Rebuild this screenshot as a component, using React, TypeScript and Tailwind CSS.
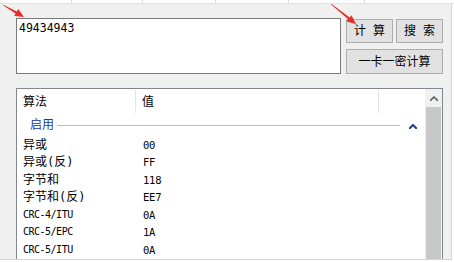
const cjk = "font-['DejaVu_Sans_Mono','Noto_Sans_CJK_SC',monospace]";
const mono = "font-['DejaVu_Sans_Mono',monospace]";

const rows: [string, string][] = [
  ["异或", "00"],
  ["异或(反)", "FF"],
  ["字节和", "118"],
  ["字节和(反)", "EE7"],
  ["CRC-4/ITU", "0A"],
  ["CRC-5/EPC", "1A"],
  ["CRC-5/ITU", "0A"],
];

// tapered red annotation arrow, tail -> tip
const arrow = (x1: number, y1: number, x2: number, y2: number) => {
  const dx = x2 - x1;
  const dy = y2 - y1;
  const len = Math.hypot(dx, dy);
  const ux = dx / len;
  const uy = dy / len;
  const nx = -uy;
  const ny = ux;
  const head = 9;
  const bx = x2 - ux * head;
  const by = y2 - uy * head;
  const p = (x: number, y: number) => `${x.toFixed(1)},${y.toFixed(1)}`;
  return [
    p(x1 + nx * 0.3, y1 + ny * 0.3),
    p(bx + nx * 1.2, by + ny * 1.2),
    p(bx + nx * 4, by + ny * 4),
    p(x2, y2),
    p(bx - nx * 4, by - ny * 4),
    p(bx - nx * 1.2, by - ny * 1.2),
    p(x1 - nx * 0.3, y1 - ny * 0.3),
  ].join(" ");
};

const Btn = ({ label, className }: { label: string; className: string }) => (
  <div
    className={`flex items-center justify-center bg-[#e1e1e1] border border-[#adadad] text-[12px] text-black leading-none ${cjk} ${className}`}
  >
    {label}
  </div>
);

const App = () => {
  return (
    <div className="relative w-[454px] h-[262px] bg-white overflow-hidden">
      <div className="flex h-[4px] border-b border-[#e3e3e3]">
        <div className="w-[72px] border-r border-[#dadada]" />
        <div className="w-[71px] border-r border-[#dadada]" />
        <div className="w-[73px] border-r border-[#dadada]" />
        <div className="w-[73px] border-r border-[#dadada]" />
        <div className="w-[76px] border-r border-[#dadada]" />
      </div>

      <div className="w-[452px] h-[256px] bg-[#f0f0f0] border-r border-b border-[#d4d4d4] overflow-hidden pl-[16px] pt-[14px]">
        <div className="flex">
          <div className={`w-[325px] h-[56px] bg-white border border-[#7a7a7a] px-[2px] pt-[4px] ${mono} text-[11.5px] leading-none text-black`}>
            49434943
          </div>
          <div className="ml-[5px] mt-[1px] flex flex-col gap-[6px]">
            <div className="flex gap-[3px]">
              <Btn label="计 算" className="w-[47px] h-[24px]" />
              <Btn label="搜 索" className="w-[47px] h-[24px]" />
            </div>
            <Btn label="一卡一密计算" className="w-[97px] h-[25px]" />
          </div>
        </div>

        <div className="mt-[14px] w-[427px] h-[200px] bg-white border border-[#828790] flex">
          <div className="flex-1 flex flex-col">
            <div className="flex h-[25px] items-stretch">
              <div className={`w-[119px] border-r border-[#e5e5e5] my-[1px] flex items-center pl-[6px] text-[12px] leading-none ${cjk}`}>
                算法
              </div>
              <div className={`w-[243px] border-r border-[#e5e5e5] my-[1px] flex items-center pl-[6px] text-[12px] leading-none ${cjk}`}>
                值
              </div>
            </div>

            <div className="flex h-[22px] items-center pl-[13px]">
              <span className={`text-[12px] leading-none text-[#1e3a9a] ${cjk}`}>启用</span>
              <div className="ml-[3px] w-[343px] h-px bg-[#a9bde6]" />
              <svg width="8" height="5" viewBox="0 0 8 5" className="ml-[9px] mt-[2px]">
                <path d="M0 5 L4 1 L8 5" fill="none" stroke="#1c3d94" strokeWidth="2" />
              </svg>
            </div>

            {rows.map(([name, val], i) => {
              const ascii = /^[\x00-\x7f]+$/.test(name);
              return (
                <div key={i} className="flex h-[17.5px] items-center">
                  <div
                    className={`w-[126px] pl-[6px] leading-none text-black ${cjk} ${
                      ascii ? "text-[10px] tracking-[-0.5px]" : "text-[12px]"
                    }`}
                  >
                    {name}
                  </div>
                  <div className={`${mono} text-[10.5px] tracking-[-0.2px] leading-none text-black`}>
                    {val}
                  </div>
                </div>
              );
            })}
          </div>

          <div className="w-[17px] bg-[#f0f0f0] flex flex-col">
            <div className="h-[18px] flex items-center justify-center">
              <svg width="8" height="5" viewBox="0 0 8 5">
                <path d="M0 5 L4 1 L8 5" fill="none" stroke="#606060" strokeWidth="1.6" />
              </svg>
            </div>
            <div className="flex-1 mx-[1px] bg-[#c8c8c8]" />
          </div>
        </div>
      </div>

      <svg className="absolute inset-0 pointer-events-none" width="454" height="262">
        <polygon points={arrow(3, 5, 24, 17)} fill="#ea2c24" />
        <polygon points={arrow(331, 4, 356, 24)} fill="#ea2c24" />
      </svg>
    </div>
  );
};

export default App;
